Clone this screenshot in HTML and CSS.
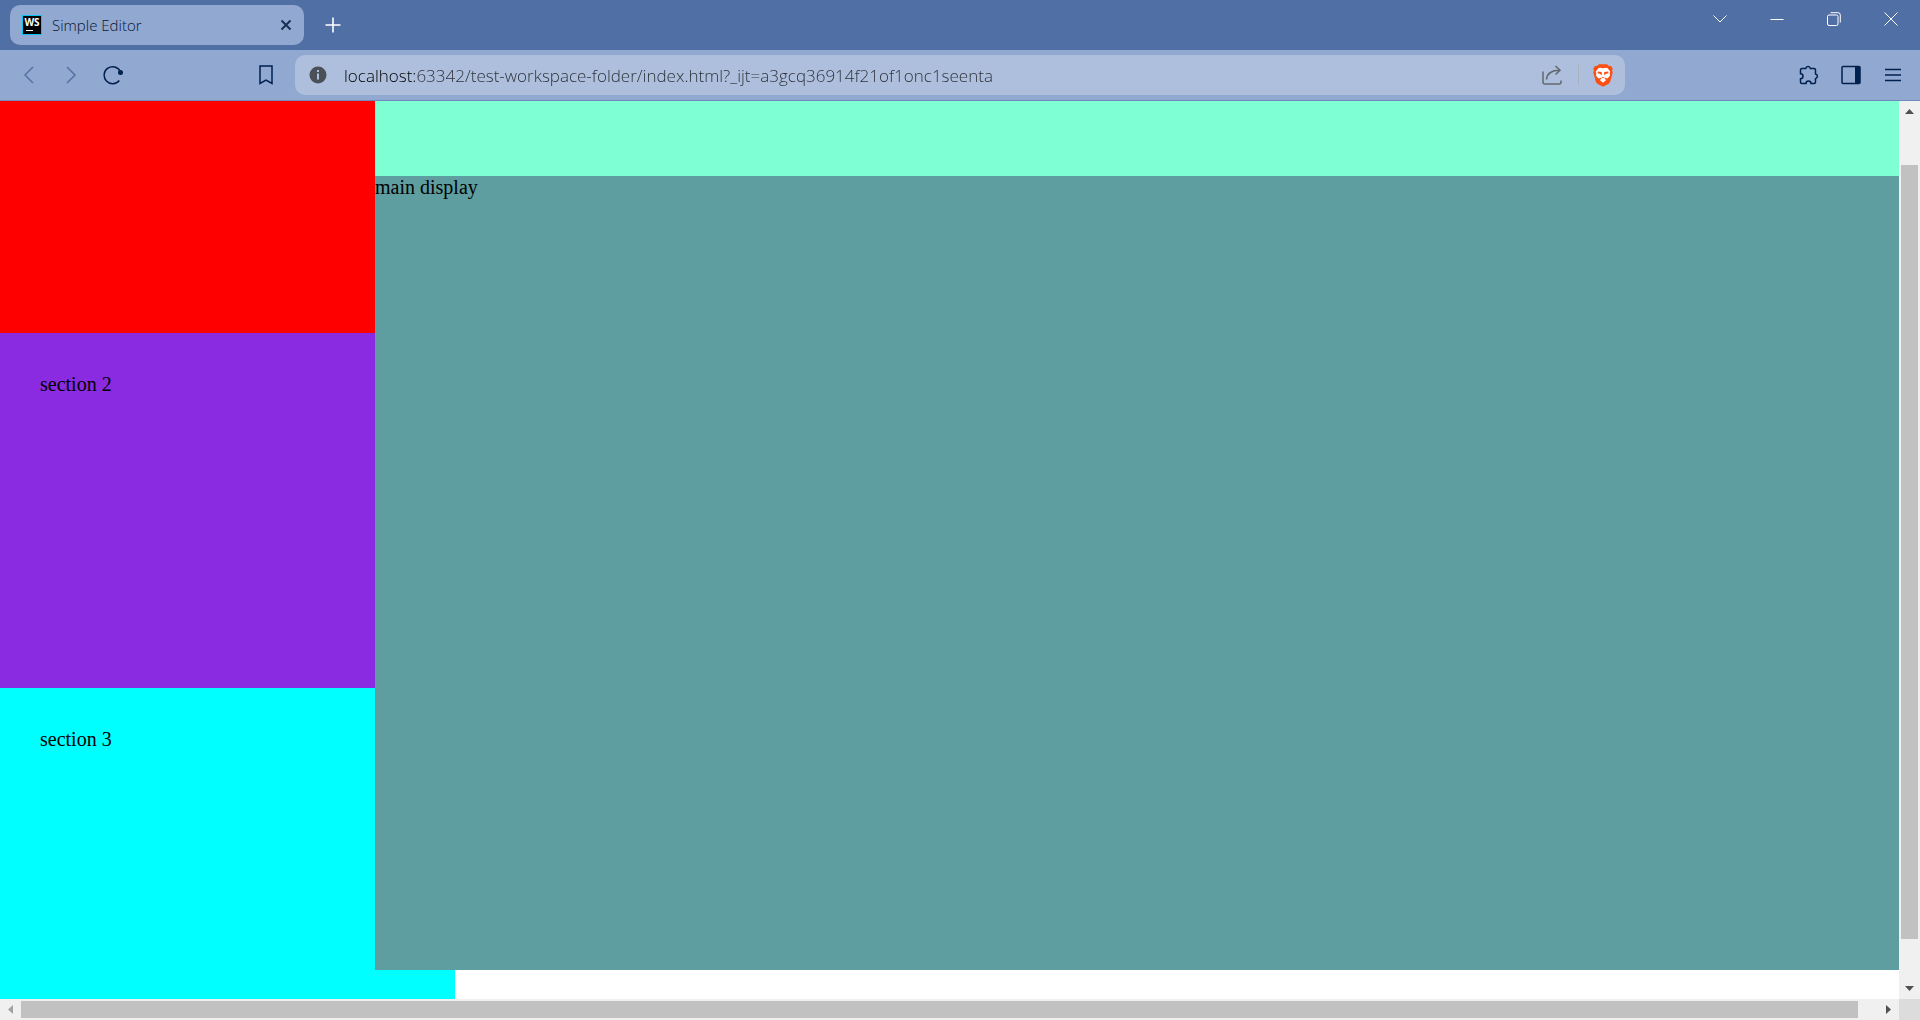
FILE: index.html
```html
<!DOCTYPE html>
<html lang="en">
<head>
    <meta charset="UTF-8">
    <meta name="viewport" content="width=device-width, initial-scale=1.0">
    <title>Simple Editor</title>
    <link rel="stylesheet" href="styles.css">
</head>
<body>
    <div class="tab-strip">
        <div class="tab">
            <svg class="tab-icon" width="20" height="20" viewBox="0 0 20 20">
                <rect width="20" height="20" fill="#07c3f2"/>
                <rect x="1" y="1" width="18" height="18" fill="#000"/>
                <text x="10" y="11" text-anchor="middle" class="tab-icon-text">WS</text>
                <rect x="4" y="15" width="7" height="1" fill="#fff"/>
            </svg>
            <span class="tab-title">Simple Editor</span>
            <button class="tab-close" aria-label="Close tab">
                <svg width="12" height="12" viewBox="0 0 12 12"><path d="M1.5 1.5l9 9M10.5 1.5l-9 9" stroke-width="2"/></svg>
            </button>
        </div>
        <button class="new-tab" aria-label="New tab">
            <svg width="16" height="16" viewBox="0 0 16 16"><path d="M8 .5v15M.5 8h15" stroke-width="1.6"/></svg>
        </button>
        <div class="window-buttons">
            <button aria-label="Search tabs">
                <svg width="14" height="14" viewBox="0 0 14 14"><path d="M.5 3.5L7 10l6.500-6.500"/></svg>
            </button>
            <button aria-label="Minimize">
                <svg width="14" height="14" viewBox="0 0 14 14"><path d="M.5 7.500h13"/></svg>
            </button>
            <button aria-label="Restore">
                <svg width="14" height="14" viewBox="0 0 14 14"><rect x=".5" y="3" width="10.500" height="10.500" rx="1.500"/><path d="M3.500.7H11a2.300 2.300 0 0 1 2.300 2.300v7.500"/></svg>
            </button>
            <button aria-label="Close">
                <svg width="14" height="14" viewBox="0 0 14 14"><path d="M.5.5l13 13M13.500.5l-13 13"/></svg>
            </button>
        </div>
    </div>

    <div class="toolbar">
        <div class="nav-buttons">
            <button class="dim" aria-label="Back">
                <svg width="20" height="20" viewBox="0 0 20 20"><path d="M14 2L6 10l8 8"/></svg>
            </button>
            <button class="dim" aria-label="Forward">
                <svg width="20" height="20" viewBox="0 0 20 20"><path d="M6 2l8 8-8 8"/></svg>
            </button>
            <button aria-label="Reload">
                <svg width="20" height="20" viewBox="0 0 20 20"><path d="M17.300 6.500A8.500 8.500 0 1 0 16.300 15.500"/><circle cx="17.500" cy="7.500" r="2.500" class="solid"/></svg>
            </button>
            <button class="bookmark" aria-label="Bookmark this page">
                <svg width="20" height="20" viewBox="0 0 20 20"><path d="M4 1h12v17.500l-6-3.500-6 3.500z"/></svg>
            </button>
        </div>
        <div class="address-bar">
            <svg width="18" height="18" viewBox="0 0 18 18">
                <circle cx="9" cy="9" r="8.500" fill="#4b4f57"/>
                <path d="M9 4v2M9 7.500v6" stroke="#aebfdd" stroke-width="2"/>
            </svg>
            <input type="text" class="address" aria-label="Address" spellcheck="false" value="localhost:63342/test-workspace-folder/index.html?_ijt=a3gcq36914f21of1onc1seenta">
            <button class="share" aria-label="Share this page">
                <svg width="20" height="20" viewBox="0 0 20 20"><path d="M1 6.500V17a2 2 0 0 0 2 2h14a2 2 0 0 0 2-2v-1.500M4.500 14.500C5 8.500 8.500 5.300 18 5.300M13.500 1l4.500 4.300-4.500 4.200"/></svg>
            </button>
            <button class="shields" aria-label="Brave Shields">
                <svg width="20" height="23" viewBox="0 0 20 23">
                    <path d="M6 .3h8l2 1.800 2-.1 1.700 2.500-.6 1.900.6 2-2.500 9.300-1.400 2L10 22.800l-5.800-3.100-1.400-2L.3 8.400l.6-2-.6-1.900L2 2l2 .1z" fill="#fb5012"/>
                    <path d="M7 3.700l3 .6 3-.6 1.500.3 2.700 3.500-.5 2.300.4 1.700-2.600 3-2.500-.8-.4 1 1.600 1.300-3.200 2.700L6.800 16l1.600-1.300-.4-1-2.500.8-2.600-3 .4-1.700-.5-2.300L5.500 4z" fill="#fff"/>
                    <path d="M4.800 7.400l3.700.6.500 1-.4 2.200-1.800-1.400-2.300-.6zM15.200 7.400l-3.700.6-.5 1 .4 2.200 1.800-1.400 2.300-.6zM8 12.400l2 .9 2-.9-2 2.100z" fill="#fb5012"/>
                </svg>
            </button>
        </div>
        <div class="toolbar-buttons">
            <button aria-label="Extensions">
                <svg width="20" height="20" viewBox="0 0 20 20"><path d="M3 3.500h3.700a2.400 2.400 0 0 1 4.700 0H15a1.500 1.500 0 0 1 1.500 1.500v4a2.400 2.400 0 0 1 0 4.700V17a1.500 1.500 0 0 1-1.500 1.500h-3a2.500 2.500 0 0 0-5 0H3A1.500 1.500 0 0 1 1.500 17v-3.200a2.500 2.500 0 0 0 0-5V5A1.500 1.500 0 0 1 3 3.500z"/></svg>
            </button>
            <button aria-label="Sidebar">
                <svg width="20" height="20" viewBox="0 0 20 20"><rect x="1" y="1.500" width="18" height="17" rx="1"/><path d="M14 1.500h5v17h-5z" class="solid"/></svg>
            </button>
            <button aria-label="Menu">
                <svg width="18" height="20" viewBox="0 0 18 20"><path d="M1 4.500h16M1 10h16M1 15.500h16"/></svg>
            </button>
        </div>
    </div>

    <div class="viewport">
        <div class="page">
            <div class="sidebar">
                <section class="section one"></section>
                <section class="section two">section 2</section>
                <section class="section three">section 3</section>
            </div>
            <div class="content">
                <header class="header"></header>
                <main class="main">main display</main>
            </div>
        </div>
        <div class="scrollbar vertical">
            <button aria-label="Scroll up"><svg width="9" height="5" viewBox="0 0 9 5"><path d="M0 5L4.500 0 9 5z"/></svg></button>
            <div class="track">
                <div class="thumb"></div>
            </div>
            <button aria-label="Scroll down"><svg width="9" height="5" viewBox="0 0 9 5"><path d="M0 0l4.500 5L9 0z"/></svg></button>
        </div>
        <div class="scrollbar horizontal">
            <button class="off" aria-label="Scroll left"><svg width="5" height="9" viewBox="0 0 5 9"><path d="M5 0L0 4.500 5 9z"/></svg></button>
            <div class="track">
                <div class="thumb"></div>
            </div>
            <button aria-label="Scroll right"><svg width="5" height="9" viewBox="0 0 5 9"><path d="M0 0l5 4.500L0 9z"/></svg></button>
        </div>
        <div class="corner"></div>
    </div>
</body>
</html>
```
FILE: styles.css
```css
* {
    box-sizing: border-box;
}
body {
    margin: 0;
    height: 100vh;
    display: flex;
    flex-direction: column;
    overflow: hidden;
    font-family: "Open Sans", "Noto Sans", sans-serif;
}
button {
    display: flex;
    align-items: center;
    justify-content: center;
    padding: 0;
    border: none;
    background: none;
}
button svg {
    fill: none;
    stroke: currentColor;
}

/* tabs */
.tab-strip {
    display: flex;
    align-items: center;
    gap: 8px;
    height: 50px;
    padding-left: 10px;
    background: #506fa5;
}
.tab {
    display: flex;
    align-items: center;
    gap: 10px;
    width: 294px;
    height: 40px;
    padding: 0 12px;
    border-radius: 10px;
    background: #91a8d1;
}
.tab-icon-text {
    font: bold 10px "Open Sans", sans-serif;
    fill: #fff;
}
.tab-title {
    flex: 1;
    font-size: 15px;
    font-weight: 300;
    color: #061633;
}
.tab-close {
    color: #1d2f50;
}
.new-tab {
    width: 42px;
    height: 40px;
    color: #fff;
}
.window-buttons {
    display: flex;
    align-self: flex-start;
    margin-left: auto;
    padding-right: 1px;
    color: #fff;
}
.window-buttons button {
    width: 57px;
    height: 37px;
    color: inherit;
}

/* toolbar */
.toolbar {
    display: grid;
    grid-template-columns: 295px 1fr 295px;
    align-items: center;
    height: 51px;
    border-bottom: 1px solid #6f8abb;
    background: #91a8d1;
}
.nav-buttons, .toolbar-buttons {
    display: flex;
    padding: 0 8px;
}
.toolbar-buttons {
    justify-content: flex-end;
    padding: 0 6px;
}
.nav-buttons button, .toolbar-buttons button {
    width: 42px;
    height: 40px;
    color: #00204f;
}
.nav-buttons svg, .toolbar-buttons svg {
    stroke-width: 1.5;
}
.nav-buttons .dim {
    color: #5671a3;
}
.nav-buttons .bookmark {
    margin-left: auto;
}
.solid {
    fill: currentColor;
    stroke: none;
}
.address-bar {
    display: flex;
    align-items: center;
    height: 40px;
    padding: 0 12px 0 14px;
    border-radius: 10px;
    background: #aebfdd;
}
.address {
    flex: 1;
    margin-left: 17px;
    padding: 0;
    border: none;
    outline: none;
    font-family: inherit;
    font-size: 17px;
    font-weight: 300;
    color: transparent;
    /* host part is darker than the path */
    background: linear-gradient(to right, #000 71px, #2b2f36 71px);
    background-clip: text;
    -webkit-background-clip: text;
}
.share {
    padding-right: 16px;
    border-right: 1px solid #a9b1c1;
    color: #62686f;
}
.share svg {
    stroke-width: 1.5;
}
.shields {
    padding-left: 14px;
}
.shields svg {
    stroke: none;
}

/* page */
.viewport {
    flex: 1;
    min-height: 0;
    display: grid;
    grid-template-columns: 1fr 21px;
    grid-template-rows: 1fr 21px;
}
.page {
    display: grid;
    grid-template-columns: 375px 1fr;
    grid-template-rows: 100%;
    min-height: 0;
    overflow: hidden;
    background: white;
    font-family: "Liberation Serif", serif;
    font-size: 20px;
    color: black;
}
.sidebar {
    display: flex;
    flex-direction: column;
}
.section {
    width: 455px;
    height: 355px;
    padding: 40px;
}
.one {
    height: 232px;
    background: red;
}
.two {
    background: blueviolet;
}
.three {
    flex: 1;
    background: aqua;
}
.content {
    display: flex;
    flex-direction: column;
    padding-bottom: 29px;
}
.header {
    height: 75px;
    background: aquamarine;
}
.main {
    flex: 1;
    background: cadetblue;
}

/* scrollbars */
.scrollbar {
    display: flex;
    background: #f0f0f0;
}
.scrollbar button {
    width: 21px;
    height: 21px;
}
.scrollbar svg {
    fill: #505050;
    stroke: none;
}
.scrollbar .off svg {
    fill: #a3a3a3;
}
.track {
    flex: 1;
    display: flex;
    padding: 0 2px;
}
.thumb {
    flex: 1;
    background: #c1c1c1;
}
.vertical, .vertical .track {
    flex-direction: column;
}
.vertical .thumb {
    margin: 43px 0 39px;
}
.horizontal .track {
    padding: 2px 0;
}
.horizontal .thumb {
    margin-right: 20px;
}
.corner {
    background: #dcdcdc;
}
```
